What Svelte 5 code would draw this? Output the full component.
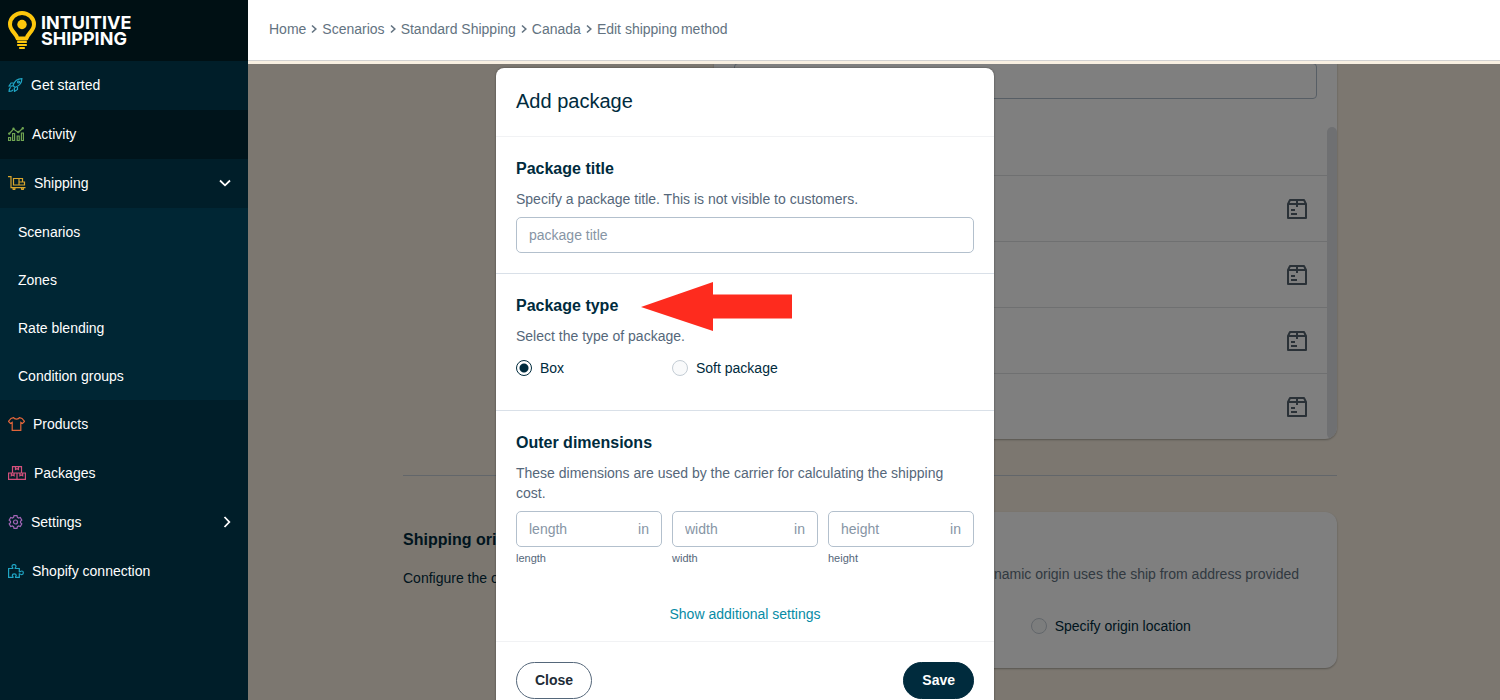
<script>
	const crumbs = ['Home', 'Scenarios', 'Standard Shipping', 'Canada', 'Edit shipping method'];
	const shippingLinks = ['Scenarios', 'Zones', 'Rate blending', 'Condition groups'];
	const dimensions = ['length', 'width', 'height'];
	const rows = [1, 2, 3, 4];

	let title = '';
	let packageType = 'box';
	let sizes = { length: '', width: '', height: '' };
</script>

<div class="app">
	<aside class="sidebar">
		<a class="logo" href="#home">
			<svg width="28" height="39" viewBox="0 0 28 39" aria-hidden="true">
				<path
					d="M9.5 27.5C8.6 22.5 2 20 2 13.2C2 7 7.6 2 14 2s12 5 12 11.2C26 20 19.4 22.5 18.5 27.5z"
					fill="none"
					stroke="#fdc70c"
					stroke-width="4"
					stroke-linejoin="round"
				/>
				<circle cx="14" cy="13.5" r="4.7" fill="#fdc70c" />
				<path d="M10 31h8M10 34h8M12 37h4" stroke="#fdc70c" stroke-width="2.2" stroke-linecap="round" />
			</svg>
			<span class="brand">Intuitive<br />Shipping</span>
		</a>
		<nav>
			<a class="item" href="#start">
				<svg class="i14" viewBox="0 0 14 14" stroke="#1fa5c4">
					<path d="M4.5 7.5C6 3 9 .6 13.4.6C13.4 5 11 8 6.5 9.5zM5 5H2.500L.6 8l3.400.2M9 9v2.500L6 13.400L5.800 10M2.300 9.500C1 10 .6 11.500.6 13.400c2 0 3.500-.5 3.900-1.800" />
					<circle cx="10" cy="4" r="1" />
				</svg>
				Get started
			</a>
			<a class="item dark" href="#activity">
				<svg class="i16" viewBox="0 0 16 14" stroke="#6fa452">
					<path d="M.6 10.500h2v3h-2zM4.600 6.500h2v7h-2zM9.200 9h2v4.500h-2zM13.400 6h2v7.500h-2zM1 7l4.500-5l4.800 3.500L15 1" />
					<circle cx="1.2" cy="6.6" r=".6" />
					<circle cx="5.5" cy="1.8" r=".6" />
					<circle cx="10.2" cy="5" r=".6" />
					<circle cx="14.8" cy="1.2" r=".6" />
				</svg>
				Activity
			</a>
			<a class="item" href="#shipping">
				<svg class="i18" viewBox="0 0 18 14" stroke="#d9a52c">
					<path d="M0 .6h3v11h14.500M5.500 2.500h5.500v6.500H5.500zM11 2.500h3.500v3.500H11M11 6h5.500v3H11" />
					<circle cx="6" cy="12.7" r="1" />
					<circle cx="14.5" cy="12.7" r="1" />
				</svg>
				Shipping
				<svg class="chev" width="12" height="8" viewBox="0 0 12 8"><path d="M1 1.500L6 6.300l5-4.800" /></svg>
			</a>
			<div class="sub">
				{#each shippingLinks as link}
					<a href="#{link}">{link}</a>
				{/each}
			</div>
			<a class="item" href="#products">
				<svg class="i17" viewBox="0 0 17 14" stroke="#e0653a">
					<path d="M5.500.6C6.500 2.500 10.500 2.500 11.500.6L14 1.400l2.500 3l-2 2l-1.700-1v8H4.200v-8l-1.700 1l-2-2L3 1.400z" />
				</svg>
				Products
			</a>
			<a class="item" href="#packages">
				<svg class="i18" viewBox="0 0 18 14" stroke="#d4507c">
					<path d="M4.500.6h9V7h-9zM7.500.6v3l1.500-.8l1.500.8v-3M.6 7h16.800v6.400H.6zM9 7v6.400M3.300 7v2.800l1.400-.8l1.400.8V7M11.900 7v2.800l1.400-.8l1.400.8V7" />
				</svg>
				Packages
			</a>
			<a class="item" href="#settings">
				<svg class="i14" viewBox="0 0 14 14" stroke="#a065b5">
					<path d="M5.500.6h3l.4 1.700l1.200.7l1.700-.5l1.500 2.600L12 6.300v1.400l1.300 1.200l-1.500 2.600l-1.700-.5l-1.200.7l-.4 1.700h-3l-.4-1.700l-1.200-.7l-1.700.5L.7 8.900L2 7.700V6.300L.7 5.100l1.500-2.600l1.700.5l1.200-.7z" />
					<circle cx="7" cy="7" r="2" />
				</svg>
				Settings
				<svg class="chev" width="8" height="12" viewBox="0 0 8 12"><path d="M1.500 1L6.300 6l-4.800 5" /></svg>
			</a>
			<a class="item" href="#shopify">
				<svg class="i16" viewBox="0 0 16 14" stroke="#1fa5c4">
					<path d="M.6 4.500h4.200C5 3.600 4 3.300 4 2.200c0-2.200 4-2.200 4 0c0 1.100-1 1.400-.8 2.300h4.100v3.300c.9.300 1.200-.8 2.400-.8c2.200 0 2.200 3.600 0 3.600c-1.200 0-1.500-1-2.400-.8v3.600H7.600c-.3-1 .6-1.300.6-2.200c0-1.900-3.900-1.900-3.900 0c0 .9.900 1.200.7 2.200H.6z" />
				</svg>
				Shopify connection
			</a>
		</nav>
	</aside>

	<div class="content">
		<header>
			<nav class="crumbs" aria-label="Breadcrumb">
				{#each crumbs as crumb, i}
					{#if i > 0}
						<svg width="6" height="10" viewBox="0 0 6 10"><path d="M1 1.500L4.800 5L1 8.500" /></svg>
					{/if}
					<a href="#{crumb}">{crumb}</a>
				{/each}
			</nav>
		</header>

		<main>
			<section class="card packages">
				<div class="search"><input type="text" aria-label="Search packages" /></div>
				<div class="list">
					<ul>
						<li class="blank"></li>
						{#each rows as row}
							<li>
								<svg width="20" height="20" viewBox="0 0 20 20" aria-hidden="true">
									<path d="M1 5L3 1h14l2 4v14H1zM1 5h18M10 1v7M4 11h4M4 15h6" />
								</svg>
							</li>
						{/each}
					</ul>
					<div class="track"></div>
				</div>
			</section>

			<hr />

			<section class="origin">
				<div class="intro">
					<h2>Shipping origin</h2>
					<p>Configure the origin</p>
				</div>
				<div class="card settings">
					<p>Dynamic origin uses the ship from address provided</p>
					<div class="options">
						<label class="radio"><input type="radio" name="origin" />Specify origin location</label>
					</div>
				</div>
			</section>
		</main>
	</div>

	<!-- Modal -->
	<div class="overlay">
		<div class="modal" role="dialog" aria-labelledby="modal-title">
			<h1 id="modal-title">Add package</h1>

			<section>
				<h2>Package title</h2>
				<label class="help" for="package-title">Specify a package title. This is not visible to customers.</label>
				<input class="field" id="package-title" type="text" placeholder="package title" bind:value={title} />
			</section>

			<section class="type">
				<h2>Package type</h2>
				<p class="help">Select the type of package.</p>
				<div class="radios">
					<label class="radio"><input type="radio" name="type" value="box" bind:group={packageType} />Box</label>
					<label class="radio"><input type="radio" name="type" value="soft" bind:group={packageType} />Soft package</label>
				</div>
				<svg class="arrow" width="151" height="50" viewBox="0 0 151 50" aria-hidden="true">
					<path d="M0 25L72 0v12.500h79v24H72v12.500z" fill="#fe2b1e" />
				</svg>
			</section>

			<section class="outer">
				<h2>Outer dimensions</h2>
				<p class="help">These dimensions are used by the carrier for calculating the shipping cost.</p>
				<div class="dims">
					{#each dimensions as name}
						<div>
							<div class="field unit">
								<input id={name} type="text" placeholder={name} bind:value={sizes[name]} />
								<span>in</span>
							</div>
							<label class="caption" for={name}>{name}</label>
						</div>
					{/each}
				</div>
				<button class="more" type="button">Show additional settings</button>
			</section>

			<footer>
				<button class="btn" type="button">Close</button>
				<button class="btn primary" type="button">Save</button>
			</footer>
		</div>
	</div>
</div>

<style>
	:global(body) {
		overflow: hidden;
	}
	.app {
		display: flex;
		position: relative;
		height: 100vh;
		overflow: hidden;
		font-family: Helvetica, 'Liberation Sans', Arial, sans-serif;
		font-size: 14px;
		line-height: 20px;
		color: #002b3d;
	}
	.app :global(*) {
		box-sizing: border-box;
	}
	h1,
	h2,
	p,
	ul {
		margin: 0;
		padding: 0;
	}
	a {
		color: inherit;
		text-decoration: none;
	}
	svg {
		flex: none;
		fill: none;
	}
	input,
	button {
		font: inherit;
		color: inherit;
	}

	/* Sidebar */
	.sidebar {
		flex: none;
		width: 248px;
		background: #001e29;
		color: #fff;
		position: relative;
		z-index: 2;
	}
	.logo {
		display: flex;
		align-items: center;
		gap: 5px;
		height: 61px;
		padding: 0 8px;
		background: #001014;
	}
	.brand {
		font-family: Inter, sans-serif;
		font-size: 18px;
		font-weight: 700;
		line-height: 16px;
		text-transform: uppercase;
	}
	.item {
		display: flex;
		align-items: center;
		gap: 8px;
		height: 49px;
		padding: 0 17px 2px 8px;
	}
	.item svg {
		stroke-width: 1.2;
	}
	.dark {
		background: #00141b;
	}
	.i14 {
		width: 15px;
		height: 14px;
	}
	.i16 {
		width: 16px;
		height: 14px;
	}
	.i17 {
		width: 17px;
		height: 14px;
	}
	.i18 {
		width: 18px;
		height: 14px;
	}
	.item .chev {
		margin-left: auto;
		stroke: #fff;
		stroke-width: 1.8;
	}
	.sub {
		background: #002634;
	}
	.sub a {
		display: flex;
		align-items: center;
		height: 48px;
		padding: 0 18px;
	}

	/* Page */
	.content {
		flex: 1;
		display: flex;
		flex-direction: column;
		min-width: 0;
		background: #f8efe1;
	}
	header {
		flex: none;
		height: 61px;
		margin-bottom: 3px;
		padding: 0 21px 2px;
		display: flex;
		align-items: center;
		background: #fff;
		border-bottom: 1px solid #d2d2d2;
	}
	.crumbs {
		display: flex;
		align-items: center;
		gap: 5px;
		color: #637381;
	}
	.crumbs svg {
		stroke: #637381;
		stroke-width: 1.6;
	}
	main {
		flex: 1;
		min-height: 0;
		overflow: hidden;
		padding: 0 163px 0 155px;
	}
	.card {
		background: #fff;
		border-radius: 12px;
		box-shadow: 0 1px 2px rgba(0, 0, 0, 0.3);
		overflow: hidden;
	}
	.packages {
		width: 66.7%;
		margin-left: auto;
		margin-top: -1px;
		border-top-left-radius: 0;
		border-top-right-radius: 0;
	}
	.search {
		padding: 0 20px 20px;
	}
	.search input {
		display: block;
		width: 100%;
		height: 36px;
		border: 1px solid #aebccb;
		border-radius: 4px;
		background: #fff;
	}
	.list {
		display: flex;
	}
	.list ul {
		flex: 1;
		list-style: none;
	}
	.list li {
		display: flex;
		align-items: center;
		justify-content: flex-end;
		height: 66px;
		padding-right: 20px;
		border-top: 1px solid #dfe0e3;
	}
	.list li.blank {
		height: 56px;
		border-top: 0;
	}
	.list svg {
		stroke: #54636f;
		stroke-width: 2;
		stroke-linejoin: round;
	}
	.track {
		width: 10px;
		margin-top: 8px;
		border-radius: 6px;
		background: #dfe1e5;
	}
	hr {
		margin: 36px 0;
		border: 0;
		border-top: 1px solid #c4cdd5;
	}
	.origin {
		display: grid;
		grid-template-columns: 1fr 2fr;
	}
	.intro h2 {
		margin: 16px 0;
	}
	h2 {
		font-size: 16px;
		line-height: 24px;
		font-weight: 700;
	}
	.settings {
		height: 156px;
		padding: 52px 20px 0;
	}
	.settings p {
		padding-right: 18px;
		text-align: right;
		color: #637381;
	}
	.options {
		display: grid;
		grid-template-columns: 1fr 1fr;
		gap: 10px;
		margin-top: 32px;
	}
	.options .radio {
		grid-column: 2;
	}
	.radio {
		display: flex;
		align-items: center;
		gap: 8px;
	}
	.radio input {
		appearance: none;
		flex: none;
		width: 16px;
		height: 16px;
		margin: 0;
		border: 1px solid #c4cdd5;
		border-radius: 50%;
		background: #f9fafb;
	}
	.radio input:checked {
		border-color: #002b3d;
		background: radial-gradient(circle, #002b3d 4px, #fff 5px);
	}

	/* Modal */
	.overlay {
		position: absolute;
		inset: 64px 0 0 0;
		display: flex;
		justify-content: center;
		align-items: flex-start;
		padding: 4px 10px 0 0;
		background: rgba(0, 0, 0, 0.5);
		z-index: 1;
		overflow: hidden;
	}
	.modal {
		width: 498px;
		background: #fff;
		border-radius: 8px;
		box-shadow: 0 0 2px rgba(0, 0, 0, 0.5);
	}
	h1 {
		padding: 19px 20px 21px;
		font-size: 20px;
		line-height: 28px;
		font-weight: 400;
		border-bottom: 1px solid #f1f2f4;
	}
	.modal section {
		position: relative;
		padding: 20px;
		border-bottom: 1px solid #d9e0e8;
	}
	.help {
		display: block;
		margin: 8px 0;
		color: #55677a;
	}
	.field {
		display: block;
		width: 100%;
		height: 36px;
		padding: 0 12px;
		border: 1px solid #b3c0cd;
		border-radius: 5px;
		background: #fff;
	}
	input::placeholder {
		color: #8795a5;
		opacity: 1;
	}
	.modal .type {
		padding-bottom: 32px;
	}
	.radios {
		display: grid;
		grid-template-columns: repeat(3, 1fr);
		gap: 10px;
		margin-top: 12px;
	}
	.radios .radio {
		white-space: nowrap;
	}
	.arrow {
		position: absolute;
		left: 145px;
		top: 8px;
	}
	.modal .outer {
		padding-bottom: 17px;
		border-color: #f1f2f4;
	}
	.dims {
		display: grid;
		grid-template-columns: repeat(3, 1fr);
		gap: 10px;
	}
	.field.unit {
		display: flex;
		align-items: center;
		color: #8795a5;
	}
	.unit input {
		flex: 1;
		width: 0;
		padding: 0;
		border: 0;
		outline: 0;
		background: none;
	}
	.caption {
		display: block;
		margin-top: 3px;
		font-size: 11px;
		line-height: 16px;
		color: #55677a;
	}
	.more {
		display: block;
		margin: 38px auto 0;
		padding: 0;
		border: 0;
		background: none;
		color: #078ba5;
	}
	footer {
		display: flex;
		justify-content: space-between;
		padding: 20px;
	}
	.btn {
		height: 37px;
		padding: 0 18px 2px;
		border: 1px solid #55677a;
		border-radius: 20px;
		background: #fff;
		color: #212b36;
		font-weight: 700;
	}
	.primary {
		border-color: #002b3d;
		background: #002b3d;
		color: #fff;
	}
</style>
